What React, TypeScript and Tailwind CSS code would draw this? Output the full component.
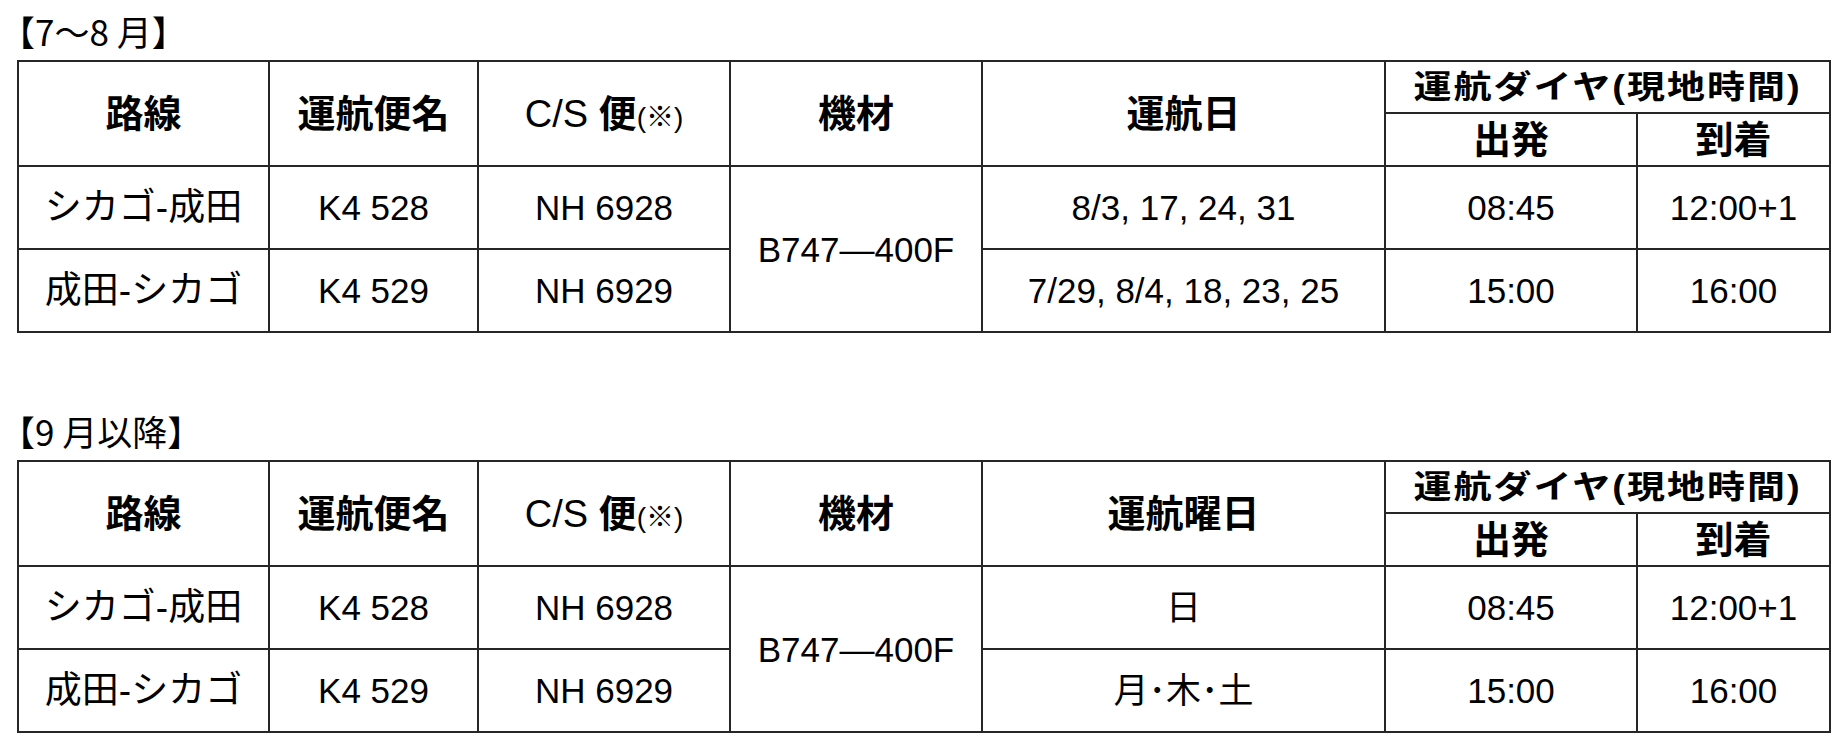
import React from "react";

type Flight = {
  route: string;
  flight: string;
  cs: string;
  days: string;
  dep: string;
  arr: string;
};

const line = "border-2 border-[#262626] p-0";
const head = `${line} font-bold text-[38px] leading-none`;
const body = `${line} font-normal text-[35px] leading-none`;

function Timetable({ title, dayLabel, rows }: { title: string; dayLabel: string; rows: Flight[] }) {
  return (
    <section>
      <h2 className="h-[60px] flex items-center text-[35px] leading-none font-normal font-['Noto_Sans_CJK_JP',sans-serif]">
        {title}
      </h2>
      <table className="ml-[17px] w-[1814px] table-fixed border-collapse text-center">
        <colgroup>
          <col className="w-[251px]" />
          <col className="w-[209px]" />
          <col className="w-[252px]" />
          <col className="w-[252px]" />
          <col className="w-[403px]" />
          <col className="w-[252px]" />
          <col className="w-[193px]" />
        </colgroup>
        <thead>
          <tr className="h-[52px]">
            <th rowSpan={2} className={head}>路線</th>
            <th rowSpan={2} className={head}>運航便名</th>
            <th rowSpan={2} className={head}>
              <span className="font-normal">C/S </span>便<span className="text-[28px] font-normal">(※)</span>
            </th>
            <th rowSpan={2} className={head}>機材</th>
            <th rowSpan={2} className={head}>{dayLabel}</th>
            <th colSpan={2} className={head}>
              <span className="inline-block scale-y-[0.85] tracking-[2px]">運航ダイヤ(現地時間)</span>
            </th>
          </tr>
          <tr className="h-[53px]">
            <th className={head}>出発</th>
            <th className={head}>到着</th>
          </tr>
        </thead>
        <tbody>
          {rows.map((r, i) => (
            <tr key={r.flight} className="h-[83px]">
              <td className={`${body} text-[37px]`}>{r.route}</td>
              <td className={body}>{r.flight}</td>
              <td className={body}>{r.cs}</td>
              {i === 0 && (
                <td rowSpan={2} className={body}>
                  B747—400F
                </td>
              )}
              <td className={body}>{r.days}</td>
              <td className={body}>{r.dep}</td>
              <td className={body}>{r.arr}</td>
            </tr>
          ))}
        </tbody>
      </table>
    </section>
  );
}

export default function App() {
  const summer: Flight[] = [
    { route: "シカゴ-成田", flight: "K4 528", cs: "NH 6928", days: "8/3, 17, 24, 31", dep: "08:45", arr: "12:00+1" },
    { route: "成田-シカゴ", flight: "K4 529", cs: "NH 6929", days: "7/29, 8/4, 18, 23, 25", dep: "15:00", arr: "16:00" },
  ];
  const autumn: Flight[] = [
    { route: "シカゴ-成田", flight: "K4 528", cs: "NH 6928", days: "日", dep: "08:45", arr: "12:00+1" },
    { route: "成田-シカゴ", flight: "K4 529", cs: "NH 6929", days: "月･木･土", dep: "15:00", arr: "16:00" },
  ];

  return (
    <div className="min-h-screen w-[1840px] bg-white text-black font-['Liberation_Sans','Noto_Sans_CJK_JP',sans-serif]">
      <div className="h-[400px]">
        <Timetable title="【7〜8 月】" dayLabel="運航日" rows={summer} />
      </div>
      <Timetable title="【9 月以降】" dayLabel="運航曜日" rows={autumn} />
    </div>
  );
}
